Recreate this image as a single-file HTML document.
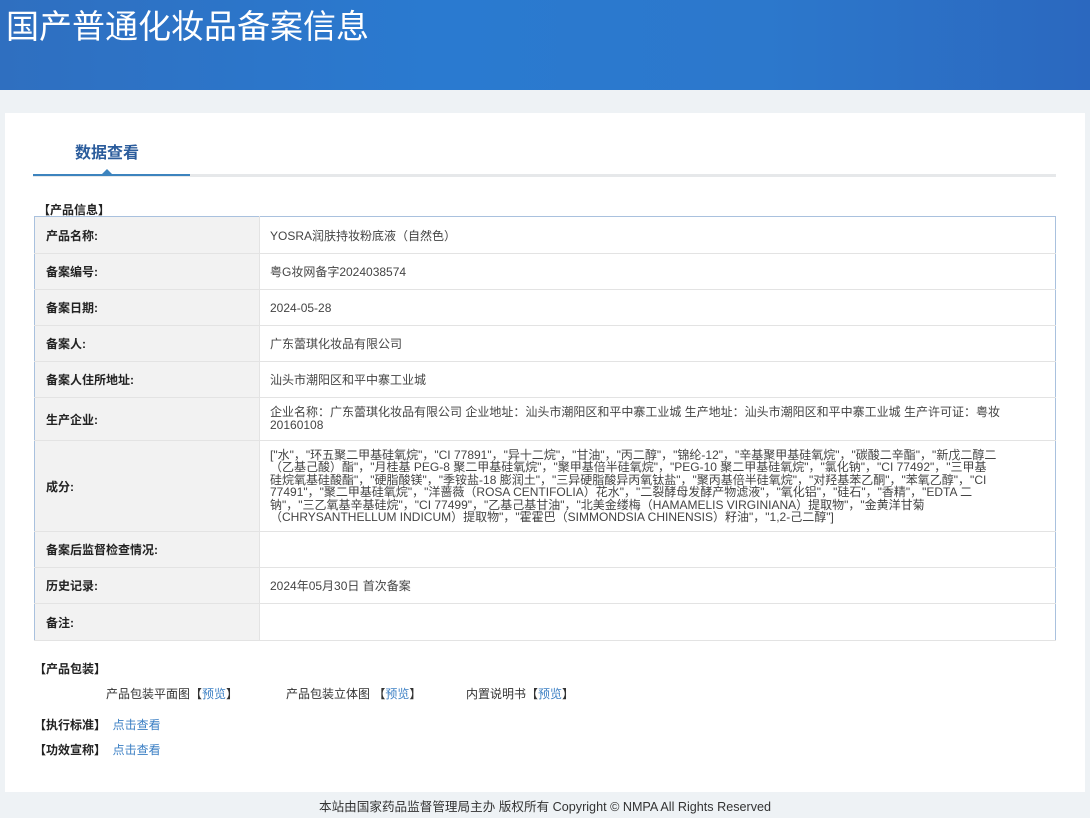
<!DOCTYPE html>
<html><head><meta charset="utf-8"><style>
*{margin:0;padding:0;box-sizing:border-box}
body{width:1090px;height:818px;background:#eef2f5;font-family:"Liberation Sans","Noto Sans CJK SC",sans-serif;font-size:12px;color:#333;position:relative;overflow:hidden}
.hd{position:absolute;left:0;top:0;width:1090px;height:90px;background:linear-gradient(90deg,#2f6fc0 0%,#2a7ad0 40%,#2c78cc 70%,#2b68bf 100%)}
.hd h1{position:absolute;left:6px;top:2px;font-size:33px;font-weight:normal;color:#fff;font-family:"Noto Sans CJK SC",sans-serif;line-height:44px}
.panel{position:absolute;left:5px;top:113px;width:1080px;height:679px;background:#fff}
.tab{position:absolute;left:75px;top:139px;font-size:16px;font-weight:bold;color:#2b5c9c;font-family:"Noto Sans CJK SC",sans-serif}
.ul{position:absolute;left:33px;top:174px;width:1023px;height:3px;background:#e6e8ea}
.ul2{position:absolute;left:33px;top:174px;width:157px;height:2px;background:#3d84be}
.tri{position:absolute;left:102px;top:169px;width:0;height:0;border-left:5px solid transparent;border-right:5px solid transparent;border-bottom:5px solid #3d84be}
.sec{position:absolute;font-weight:bold;color:#222;font-size:12px}
table{position:absolute;left:34px;top:216px;width:1022px;border-collapse:collapse;border:1px solid #a9c1de}
td{border-bottom:1px solid #e3e3e3;vertical-align:middle;font-size:12px}
td.l{width:225px;background:#f2f2f2;font-weight:bold;padding-left:11px;color:#222;border-right:1px solid #e3e3e3}
td.v{padding-left:10px;color:#444}
.cf{line-height:12.5px;padding-right:58px}
a{color:#3b7fc4;text-decoration:none}
.t{position:absolute;font-size:12px;color:#333}
.ft{position:absolute;top:796px;left:0;width:1090px;text-align:center;font-size:12.6px;color:#333}
</style></head><body>
<div class="hd"><h1>国产普通化妆品备案信息</h1></div>
<div class="panel"></div>
<div class="tab">数据查看</div>
<div class="ul"></div><div class="ul2"></div><div class="tri"></div>
<div class="sec" style="left:38px;top:201px">【产品信息】</div>
<table>
<tr style="height:37px"><td class="l">产品名称:</td><td class="v">YOSRA润肤持妆粉底液（自然色）</td></tr>
<tr style="height:36px"><td class="l">备案编号:</td><td class="v">粤G妆网备字2024038574</td></tr>
<tr style="height:36px"><td class="l">备案日期:</td><td class="v">2024-05-28</td></tr>
<tr style="height:36px"><td class="l">备案人:</td><td class="v">广东蕾琪化妆品有限公司</td></tr>
<tr style="height:36px"><td class="l">备案人住所地址:</td><td class="v">汕头市潮阳区和平中寨工业城</td></tr>
<tr style="height:43px"><td class="l">生产企业:</td><td class="v" style="line-height:13px;padding-right:40px">企业名称：广东蕾琪化妆品有限公司 企业地址：汕头市潮阳区和平中寨工业城 生产地址：汕头市潮阳区和平中寨工业城 生产许可证：粤妆20160108</td></tr>
<tr style="height:91px"><td class="l">成分:</td><td class="v cf">["水"，"环五聚二甲基硅氧烷"，"CI 77891"，"异十二烷"，"甘油"，"丙二醇"，"锦纶-12"，"辛基聚甲基硅氧烷"，"碳酸二辛酯"，"新戊二醇二（乙基己酸）酯"，"月桂基 PEG-8 聚二甲基硅氧烷"，"聚甲基倍半硅氧烷"，"PEG-10 聚二甲基硅氧烷"，"氯化钠"，"CI 77492"，"三甲基硅烷氧基硅酸酯"，"硬脂酸镁"，"季铵盐-18 膨润土"，"三异硬脂酸异丙氧钛盐"，"聚丙基倍半硅氧烷"，"对羟基苯乙酮"，"苯氧乙醇"，"CI 77491"，"聚二甲基硅氧烷"，"洋蔷薇（ROSA CENTIFOLIA）花水"，"二裂酵母发酵产物滤液"，"氧化铝"，"硅石"，"香精"，"EDTA 二钠"，"三乙氧基辛基硅烷"，"CI 77499"，"乙基己基甘油"，"北美金缕梅（HAMAMELIS VIRGINIANA）提取物"，"金黄洋甘菊（CHRYSANTHELLUM INDICUM）提取物"，"霍霍巴（SIMMONDSIA CHINENSIS）籽油"，"1,2-己二醇"]</td></tr>
<tr style="height:36px"><td class="l">备案后监督检查情况:</td><td class="v"></td></tr>
<tr style="height:36px"><td class="l">历史记录:</td><td class="v">2024年05月30日 首次备案</td></tr>
<tr style="height:37px"><td class="l">备注:</td><td class="v"></td></tr>
</table>
<div class="sec" style="left:34px;top:660px">【产品包装】</div>
<div class="t" style="left:106px;top:685px">产品包装平面图【<a>预览</a>】</div>
<div class="t" style="left:286px;top:685px">产品包装立体图 【<a>预览</a>】</div>
<div class="t" style="left:466px;top:685px">内置说明书【<a>预览</a>】</div>
<div class="sec" style="left:34px;top:716px">【执行标准】&nbsp; <a style="font-weight:normal">点击查看</a></div>
<div class="sec" style="left:34px;top:741px">【功效宣称】&nbsp; <a style="font-weight:normal">点击查看</a></div>
<div class="ft">本站由国家药品监督管理局主办 版权所有 Copyright © NMPA All Rights Reserved</div>
</body></html>
